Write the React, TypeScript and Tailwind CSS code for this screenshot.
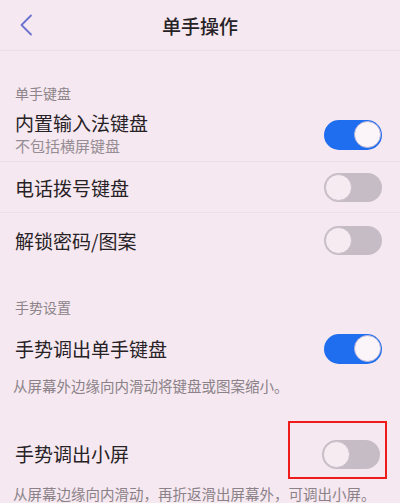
import React from 'react';

const font = { fontFamily: '"Noto Sans CJK SC", "Noto Sans", sans-serif' };

const Toggle: React.FC<{ on?: boolean }> = ({ on }) =>
  on ? (
    <div className="w-[58px] h-[30px] rounded-full bg-[#1f6ef0] flex items-center justify-end pr-[1.5px]">
      <div className="w-[27px] h-[27px] rounded-full bg-[#fbf4f8] border border-[#b9b4d8]" />
    </div>
  ) : (
    <div className="w-[58px] h-[29px] rounded-full bg-[#c6bcc5] flex items-center pl-[1px]">
      <div className="w-[27px] h-[27px] rounded-full bg-[#f7ebf2] border border-[#cbc0ca]" />
    </div>
  );

export default function App() {
  return (
    <div className="w-[400px] h-[503px] overflow-hidden bg-[#f6e8f0] text-[#272226]" style={font}>
      {/* 顶栏 */}
      <div className="relative h-[51px] flex items-center justify-center border-b border-[#ecdde6]">
        <svg className="absolute left-[19px] top-[14px]" width="14" height="22" viewBox="0 0 14 22">
          <path d="M12 1.5 L2.5 11 L12 20.5" fill="none" stroke="#6a72cf" strokeWidth="1.8" strokeLinecap="round" strokeLinejoin="round" />
        </svg>
        <span className="text-[19px] font-medium leading-[24px] mt-[2px]">单手操作</span>
      </div>

      {/* 单手键盘 */}
      <div className="h-[54px] pt-[32px] pl-[15px] text-[14px] leading-[20px] text-[#8c848a]">单手键盘</div>

      <div className="h-[57px] flex items-center justify-between pl-[15px] pr-[18px] border-b border-[#ecdfe7]">
        <div className="flex flex-col pt-[1px]">
          <span className="text-[19px] leading-[24px]">内置输入法键盘</span>
          <span className="text-[15px] leading-[20px] text-[#958d93] mt-[1px]">不包括横屏键盘</span>
        </div>
        <div className="mt-[3px]">
          <Toggle on />
        </div>
      </div>

      <div className="h-[51px] flex items-center justify-between pl-[15px] pr-[18px] border-b border-[#ecdfe7]">
        <span className="text-[19px] leading-[24px] mt-[2px]">电话拨号键盘</span>
        <Toggle />
      </div>

      <div className="h-[54px] flex items-center justify-between pl-[15px] pr-[18px]">
        <span className="text-[19px] leading-[24px] mt-[2px]">解锁密码/图案</span>
        <Toggle />
      </div>

      {/* 手势设置 */}
      <div className="h-[54px] pt-[30px] pl-[15px] text-[14px] leading-[20px] text-[#8c848a]">手势设置</div>

      <div className="h-[55px] flex items-center justify-between pl-[15px] pr-[18px]">
        <span className="text-[19px] leading-[24px]">手势调出单手键盘</span>
        <Toggle on />
      </div>
      <div className="pl-[13px] text-[14.5px] leading-[20px] text-[#8a8288]">从屏幕外边缘向内滑动将键盘或图案缩小。</div>

      <div className="h-[88px] flex items-end justify-between pl-[15px] pr-[20px] pb-[15px]">
        <span className="text-[19px] leading-[24px] mb-[3px]">手势调出小屏</span>
        <div className="relative">
          <Toggle />
          <div className="absolute -left-[34px] -top-[19px] w-[99px] h-[58px] border-2 border-[#f01c1c]" />
        </div>
      </div>
      <div className="pl-[13px] text-[14.5px] leading-[20px] text-[#8a8288] whitespace-nowrap">从屏幕边缘向内滑动，再折返滑出屏幕外，可调出小屏。</div>
    </div>
  );
}
